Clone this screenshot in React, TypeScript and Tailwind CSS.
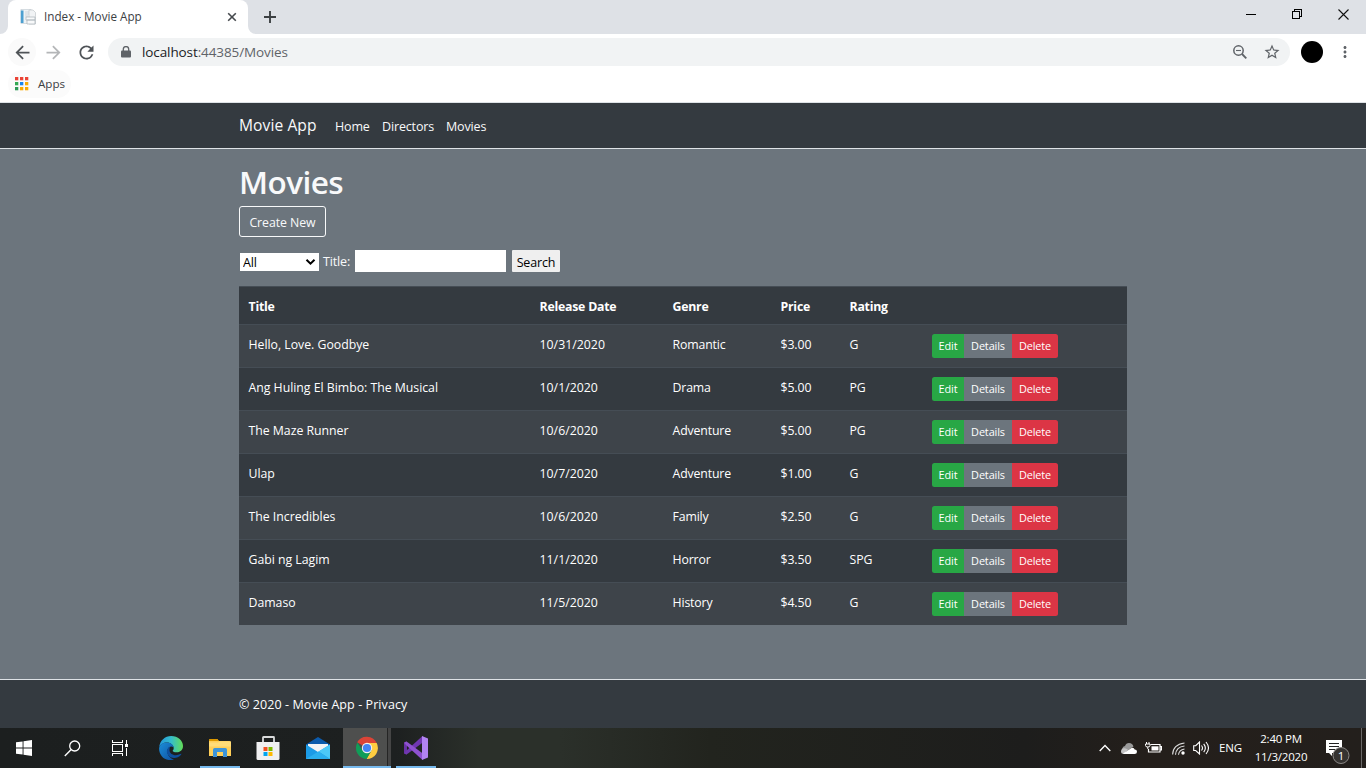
import React from "react";
import { MdArrowBack, MdArrowForward, MdRefresh, MdStarBorder, MdMoreVert } from "react-icons/md";

const movies = [
  ["Hello, Love. Goodbye", "10/31/2020", "Romantic", "$3.00", "G"],
  ["Ang Huling El Bimbo: The Musical", "10/1/2020", "Drama", "$5.00", "PG"],
  ["The Maze Runner", "10/6/2020", "Adventure", "$5.00", "PG"],
  ["Ulap", "10/7/2020", "Adventure", "$1.00", "G"],
  ["The Incredibles", "10/6/2020", "Family", "$2.50", "G"],
  ["Gabi ng Lagim", "11/1/2020", "Horror", "$3.50", "SPG"],
  ["Damaso", "11/5/2020", "History", "$4.50", "G"],
];

function TabStrip() {
  return (
    <div className="flex h-[34px] items-end bg-[#dee1e6] text-[#3c4043]">
      <svg width="8" height="8"><path d="M8 0V8H0A8 8 0 0 0 8 0Z" fill="#fff" /></svg>
      <div className="flex h-[34px] w-[240px] items-center rounded-t-lg bg-white pl-3 pr-[10px]">
        <svg width="16" height="16" viewBox="0 0 16 16" className="shrink-0">
          <rect x="1" y="0.5" width="10" height="14" fill="#eef2f5" stroke="#c8d0d6" strokeWidth=".7" />
          <rect x="0.8" y="1.5" width="2.7" height="12.5" fill="#4c9fd0" />
          <path d="M5 3h5M5 5h5M5 7h3" stroke="#c3ccd2" strokeWidth=".7" />
          <path d="M9 1h4l2.5 2.5V15H9z" fill="#f1f3f5" stroke="#c3c8cc" strokeWidth=".7" />
          <path d="M6 8h9v3H6zM7 11h8v4H7z" fill="#f8f9fa" stroke="#aab2b8" strokeWidth=".7" />
        </svg>
        <span className="ml-2 text-[11.700px] tracking-[0px] whitespace-nowrap">Index - Movie App</span>
        <svg width="12" height="12" viewBox="0 0 12 12" className="ml-auto"><path d="M2.2 2.2l7.6 7.6M9.8 2.2L2.2 9.8" stroke="#45494d" strokeWidth="1.600" /></svg>
      </div>
      <svg width="8" height="8"><path d="M0 0V8H8A8 8 0 0 1 0 0Z" fill="#fff" /></svg>
      <svg width="12" height="12" viewBox="0 0 12 12" className="mb-[11px] ml-2"><path d="M6 0v12M0 6h12" stroke="#3c4043" strokeWidth="1.9" /></svg>
      <div className="mb-[14px] ml-auto flex items-center gap-[36px] pr-[17px]">
        <svg width="10" height="11" shapeRendering="crispEdges"><path d="M0 5.5h10" stroke="#000" /></svg>
        <svg width="10" height="11" className="shrink-0" shapeRendering="crispEdges"><path d="M.5 2.5h7v7h-7zM2.5 2V.5h7v7H8" fill="none" stroke="#000" /></svg>
        <svg width="11" height="11"><path d="M.5 .5l10 10M10.500 .5l-10 10" stroke="#111" strokeWidth="1.1" /></svg>
      </div>
    </div>
  );
}

function Toolbar() {
  return (
    <div className="flex h-[36px] items-center bg-white pl-2 text-[#5f6368]">
      <div className="flex size-7 items-center justify-center rounded-full bg-[#fafafa] text-[#4f5357]"><MdArrowBack size={21} /></div>
      <MdArrowForward size={21} className="ml-[7px] text-[#b4b6b8]" />
      <MdRefresh size={21} className="ml-3 text-[#4f5357]" />
      <div className="ml-[11px] flex h-7 w-[1182px] items-center rounded-full bg-[#f1f3f4] pl-[13px] pr-[9px]">
        <svg width="10" height="12" viewBox="0 0 10 12"><path d="M1 4.500h8q1 0 1 1V10.500q0 1-1 1H1q-1 0-1-1V5.500q0-1 1-1z" fill="#5f6368" /><path d="M2.300 5V3.300a2.700 2.700 0 0 1 5.400 0V5" fill="none" stroke="#5f6368" strokeWidth="1.300" /></svg>
        <span className="ml-[11px] text-[13.500px] tracking-[-0.1px] whitespace-nowrap"><span className="text-[#202124]">localhost</span>:44385/Movies</span>
        <svg width="14" height="14" viewBox="0 0 14 14" className="ml-auto"><g fill="none" stroke="#5f6368"><circle cx="5.500" cy="5.500" r="4.700" strokeWidth="1.500" /><path d="M3 5.500h5" strokeWidth="1.100" /><path d="M9 9l4.300 4.300" strokeWidth="1.800" /></g></svg>
        <MdStarBorder size={18} className="ml-[16px]" />
      </div>
      <div className="ml-[11px] size-[22px] rounded-full bg-black" />
      <MdMoreVert size={18} className="ml-[13px]" />
    </div>
  );
}

function Bookmarks() {
  const colors = ["#ea4335", "#ea4335", "#ea4335", "#34a853", "#1a86f0", "#fbab05", "#2f9a56", "#fbab05", "#fbab05"];
  return (
    <div className="flex h-8 items-start bg-white pl-2">
      <div className="flex h-7 w-[63px] items-center rounded-full bg-[#fbfbfb] pl-[7px]">
        <svg width="14" height="14">
          {colors.map((c, i) => <rect key={i} x={(i % 3) * 5} y={Math.floor(i / 3) * 5} width="3.300" height="3.300" fill={c} />)}
        </svg>
        <span className="ml-[9px] text-[11.600px] text-[#3c4043]">Apps</span>
      </div>
    </div>
  );
}

function NavBar() {
  return (
    <nav className="flex h-[47px] items-center border-y border-[#dee2e6] bg-[#343a40] pl-[239px] text-[12.500px] tracking-[-0.15px] text-[#f8f9fa]">
      <span className="w-[96px] pt-px text-[15.600px] tracking-[0.08px]">Movie App</span>
      <span className="w-[47px] pt-[3px]">Home</span>
      <span className="w-[64px] pt-[3px]">Directors</span>
      <span className="pt-[3px]">Movies</span>
    </nav>
  );
}

function Filters() {
  return (
    <div className="mt-[13px] flex h-[22px] items-center text-[12.500px] tracking-[-0.15px]">
      <div className="mt-px ml-px flex h-[18px] w-[79px] items-center bg-white pr-[3px] pl-[3px] text-black">
        <select className="min-w-0 flex-1 appearance-none pt-[2px] leading-[18px] outline-none"><option>All</option></select>
        <svg width="11" height="8" viewBox="0 0 11 8"><path d="M1.500 1.700l4 4 4-4" fill="none" stroke="#000" strokeWidth="2" /></svg>
      </div>
      <span className="ml-1 w-[32px] pt-[3px]">Title:</span>
      <input className="h-[22px] w-[151px] bg-white text-black outline-none" />
      <button className="ml-[6px] h-[22px] w-[48px] rounded-[1px] bg-[#efefef] pt-[3px] text-center leading-[19px] text-black">Search</button>
    </div>
  );
}

const cellTracking = ["tracking-[-0.02px]", "tracking-[0.02px]", "tracking-[-0.14px]", "tracking-[-0.1px]", "tracking-[-0.1px]"];

function MovieTable() {
  return (
    <table className="mt-[14px] w-[888px] table-fixed border-collapse bg-[#343a40] text-left text-[12.300px] text-white">
      <colgroup>
        <col className="w-[291px]" /><col className="w-[133px]" /><col className="w-[108px]" /><col className="w-[69px]" /><col className="w-[83px]" /><col />
      </colgroup>
      <thead>
        <tr className="h-[38px] border-t border-[#454d55]">
          {["Title", "Release Date", "Genre", "Price", "Rating", ""].map((h, i) => <th key={i} className="pt-[3px] pb-0 pl-[9.500px] font-bold tracking-[-0.22px]">{h}</th>)}
        </tr>
      </thead>
      <tbody>
        {movies.map((m) => (
          <tr key={m[0]} className="h-[43px] border-t border-[#454d55] last:h-[42.500px] odd:bg-[#3e444a]">
            {m.map((c, i) => <td key={i} className={`pt-0 pb-px pl-[9.500px] ${cellTracking[i]}`}>{c}</td>)}
            <td className="py-0 pl-[9px]">
              <div className="flex h-6 w-[126px] overflow-hidden rounded-[2.500px] text-[10.900px] leading-6 tracking-[-0.12px]">
                <a className="w-8 bg-[#28a745] text-center">Edit</a>
                <a className="w-12 bg-[#6c757d] text-center">Details</a>
                <a className="w-[46px] bg-[#dc3545] text-center">Delete</a>
              </div>
            </td>
          </tr>
        ))}
      </tbody>
    </table>
  );
}

function Slot({ width, active, children }: { width: string; active?: boolean; children: React.ReactNode }) {
  return (
    <div className={`flex h-10 shrink-0 items-center justify-center ${width} ${active ? "border-b-2 border-[#76b9ed] pt-0.5" : ""}`}>{children}</div>
  );
}

function Taskbar() {
  return (
    <div className="flex h-10 items-center bg-[linear-gradient(90deg,#1c1f1f_0%,#1d2020_29%,#2b302a_35%,#2b302a_41%,#22241e_52%,#1d1d1c_75%,#241f1b_84%,#231f1c_100%)] text-white">
      <Slot width="w-12"><svg width="16" height="16"><path d="M0 2.300L6.600 1.400V7.500H0zM7.500 1.200L16 0V7.500H7.500zM0 8.400H6.600V14.600L0 13.700zM7.500 8.400H16V16L7.500 14.800z" fill="#fff" /></svg></Slot>
      <Slot width="w-12"><svg width="17" height="17"><circle cx="10.700" cy="6" r="5" fill="none" stroke="#fff" strokeWidth="1.300" /><path d="M7.200 9.600L.8 16" stroke="#fff" strokeWidth="1.400" /></svg></Slot>
      <Slot width="w-12"><svg width="16" height="16" fill="none" stroke="#fff" shapeRendering="crispEdges"><path d="M.5 0v2.500h10V0M.5 16v-2.500h10V16M.5 4.500h10v7H.5zM14.500 0v4M14.500 8v8" /><path d="M13 4h3v3h-3z" fill="#fff" stroke="none" /></svg></Slot>
      <Slot width="w-[54px]">
        <svg width="24" height="24" viewBox="0 0 24 24">
          <defs>
            <linearGradient id="edgeTop" x1="0" y1=".5" x2="1" y2=".5"><stop offset="0" stopColor="#2296dd" /><stop offset=".5" stopColor="#35bccb" /><stop offset="1" stopColor="#63dd57" /></linearGradient>
            <linearGradient id="edgeBody" x1="0" y1="0" x2="1" y2="1"><stop offset="0" stopColor="#1b8ed9" /><stop offset="1" stopColor="#0f50a0" /></linearGradient>
          </defs>
          <path d="M.2 11.500C.7 4.500 6 0 12.200 0 19 0 24 4.800 24 10c0 4-3 6.300-6.500 6.300-2.500 0-4-.8-3.800-1.600.1-.5 1-.9 1-2.500C14.700 9 11.500 6.500 8 6.500S1 8.500.2 11.500Z" fill="url(#edgeTop)" />
          <path d="M.1 12.500C.5 8.500 4 6.500 8 6.500c3 0 6.200 1.900 6.600 4.800C10.500 8.800 7.500 13 8.500 17c.8 3.400 3.500 6 6.500 6.600C7 26 0 20 .1 12.500Z" fill="url(#edgeBody)" />
          <path d="M11 10.700c-3 1.400-3.800 4.500-2.500 7.300 2 4.700 9.500 5.500 13.500.8.700-.8.400-1.300-.5-.8-5.300 2.800-11.500.2-11-4.600.1-1 .3-1.900.5-2.700Z" fill="#0e4f9d" />
        </svg>
      </Slot>
      <div className="w-[2px]" />
      <Slot width="w-10" active>
        <svg width="22" height="19" viewBox="0 0 22 19"><path d="M0 1.500Q0 0 1.500 0H8l2 2h10.500Q22 2 22 3.500V17H0z" fill="#ffcf58" /><path d="M0 1q0-1 1-1h7.500l1 2H0z" fill="#dc9800" /><path d="M0 3.500h9l1.500-1H22v5H0z" fill="#ffdc78" /><path d="M4 18v-7.300q0-1.700 1.700-1.700h10.600q1.700 0 1.700 1.700V18h-4v-5H8v5z" fill="#3d94d8" /></svg>
      </Slot>
      <div className="w-2" />
      <Slot width="w-10">
        <svg width="24" height="24" viewBox="0 0 24 24"><path d="M7 7V1.500Q7 1 7.500 1h10Q18 1 18 1.500V7" fill="none" stroke="#d9dadb" strokeWidth="1.800" /><path d="M.5 6h23v16.500q0 1.500-1.500 1.500H2Q.5 24 .5 22.500z" fill="#f0f0f1" /><path d="M7.500 11h4v4h-4z" fill="#f25022" /><path d="M12.500 11h4v4h-4z" fill="#7fba00" /><path d="M7.500 16h4v4h-4z" fill="#00a4ef" /><path d="M12.500 16h4v4h-4z" fill="#ffb900" /></svg>
      </Slot>
      <div className="w-[10px]" />
      <Slot width="w-10">
        <svg width="24" height="22" viewBox="0 0 24 22"><path d="M0 7.500L12 0l12 7.500V10H0z" fill="#0c5bac" /><path d="M2 7h20v6l-10 4L2 13z" fill="#f3f4f5" /><path d="M0 7.500L12 15 24 7.500V22H0z" fill="#1c9be6" /><path d="M24 7.500L12.500 14.500 24 22z" fill="#4cc9f7" /><path d="M0 22l12.500-7.500L24 22z" fill="#2bafee" /></svg>
      </Slot>
      <div className="w-[5px]" />
      <div className="flex h-10 w-[48px] border-b-2 border-[#76b9ed]">
        <div className="flex w-[44px] items-center justify-center bg-[#4e4f4e] pl-[3px] pt-0.5">
          <svg width="24" height="24" viewBox="0 0 24 24">
            <path d="M12 12L2.100 6.300A11 11 0 0 1 21.700 7H12z" fill="#db4437" />
            <path d="M12 7h9.700A11 11 0 0 1 11.500 23l4.900-8.500z" fill="#ffcd40" />
            <path d="M2.400 6.500A11 11 0 0 0 11.500 23l4.900-8.400L12 12l-4.500 2.400z" fill="#109d58" />
            <circle cx="12" cy="12" r="5.200" fill="#f1f1f1" /><circle cx="12" cy="12" r="4.100" fill="#4385f4" />
          </svg>
        </div>
        <div className="w-1 border-l border-[#252525] bg-[#454545]" />
      </div>
      <div className="w-[5px]" />
      <Slot width="w-10" active>
        <svg width="24" height="24" viewBox="0 0 24 24">
          <path d="M0 6.700L2.300 5.400 3 6V18l-.7.600L0 17.300z" fill="#6a32a8" />
          <path d="M0 17.300l2.300 1.300L4 17.500 18.500 6.700V0L2.500 14.500z" fill="#7037b1" />
          <path d="M0 6.700L2.300 5.400 4 6.500 18.500 17.300V24L2.500 9.500z" fill="#8f52d0" />
          <path d="M18 0l6 2.500v19L18 24z" fill="#b283f2" />
        </svg>
      </Slot>
      <div className="ml-auto flex h-10 items-center">
        <svg width="12" height="8" viewBox="0 0 12 8"><path d="M.7 7L6 1.500 11.300 7" fill="none" stroke="#fff" strokeWidth="1.300" /></svg>
        <svg width="16" height="11" viewBox="0 0 16 11" className="ml-[10px]"><path d="M1 6Q2 3 4 3 5 0 8 0q3.500 0 4.500 3.500L6 8z" fill="#999" /><path d="M3 11q-3 0-3-2.500Q0 5.500 3 5.300q2-.5 4 1.500z" fill="#c4c4c4" /><path d="M2 10.500L10.500 5q2.300-.8 3.200 1.500Q16 6.500 16 8.700 16 11 13.500 11H3z" fill="#fff" /></svg>
        <svg width="17" height="12" viewBox="0 0 17 12" className="ml-2"><path d="M5.500 2.500h9.500v7.500H3.500V7M15 4.500h1.400v3.500H15" fill="none" stroke="#fff" strokeWidth="1.200" /><path d="M6.500 4.300h7v4.200h-7z" fill="#fff" /><path d="M1.500 0v2M4 0v2M.5 2h4.500v1.500Q5 5 2.800 5 .5 5 .5 3.500zM2.800 5v2" fill="none" stroke="#fff" /></svg>
        <svg width="13" height="13" viewBox="0 0 13 13" className="ml-[10px]"><g fill="none" stroke="#ddd" strokeWidth="1.100"><path d="M.6 12.500Q1 2.500 12.500 1M3.500 12.800Q4 5 12.500 4M6.500 12.800Q7 8 12.500 7" /></g><circle cx="11" cy="11" r="1.700" fill="#fff" /></svg>
        <svg width="17" height="14" viewBox="0 0 17 14" className="ml-2"><g fill="none" stroke="#fff" strokeWidth="1.100"><path d="M.7 4.700h2L6.500 1v12L2.700 9.500h-2zM8.500 4.500q2 2.500 0 5M10.700 2.800q3.300 4.200 0 8.400M13 1q5 6 0 12" /></g></svg>
        <span className="ml-[9px] w-[24px] text-[11.500px] tracking-[-0.2px]">ENG</span>
        <div className="ml-[9px] w-[58px] text-center text-[11.500px] leading-[18px] tracking-[-0.2px] whitespace-nowrap"><div>2:40 PM</div><div>11/3/2020</div></div>
        <svg width="26" height="24" viewBox="0 0 26 24" className="ml-[15px] mt-2">
          <path d="M1 0h16v13H7v3l-3-3H1z" fill="#fff" /><path d="M4 3.500h10M4 6.500h10M4 9.500h6" stroke="#222" />
          <circle cx="16" cy="15.500" r="8" fill="#353331" stroke="#8c8987" />
          <text x="16" y="19.500" fill="#fff" fontSize="11.500" textAnchor="middle">1</text>
        </svg>
        <div className="ml-[10px] mr-1 h-10 w-px bg-[#6a6867]" />
      </div>
    </div>
  );
}

export default function App() {
  return (
    <div className="flex h-[768px] w-[1366px] flex-col overflow-hidden bg-[#6c757d] font-['Open_Sans','Noto_Sans',sans-serif]">
      <TabStrip />
      <Toolbar />
      <Bookmarks />
      <NavBar />
      <main className="flex-1 pl-[239px] text-[#f8f9fa]">
        <h1 className="mt-[14px] h-[43px] text-[31.500px] leading-[38px] font-semibold tracking-[-0.55px]">Movies</h1>
        <button className="flex h-[31px] w-[87px] items-center justify-center rounded-[3px] border border-[#f8f9fa] pt-[3px] text-[12.300px] tracking-[-0.05px]">Create New</button>
        <Filters />
        <MovieTable />
      </main>
      <footer className="flex h-[49px] items-center border-t border-[#dee2e6] bg-[#343a40] pt-[2px] pl-[239px] text-[12.500px] tracking-[0.08px] text-white">© 2020 - Movie App - Privacy</footer>
      <Taskbar />
    </div>
  );
}
